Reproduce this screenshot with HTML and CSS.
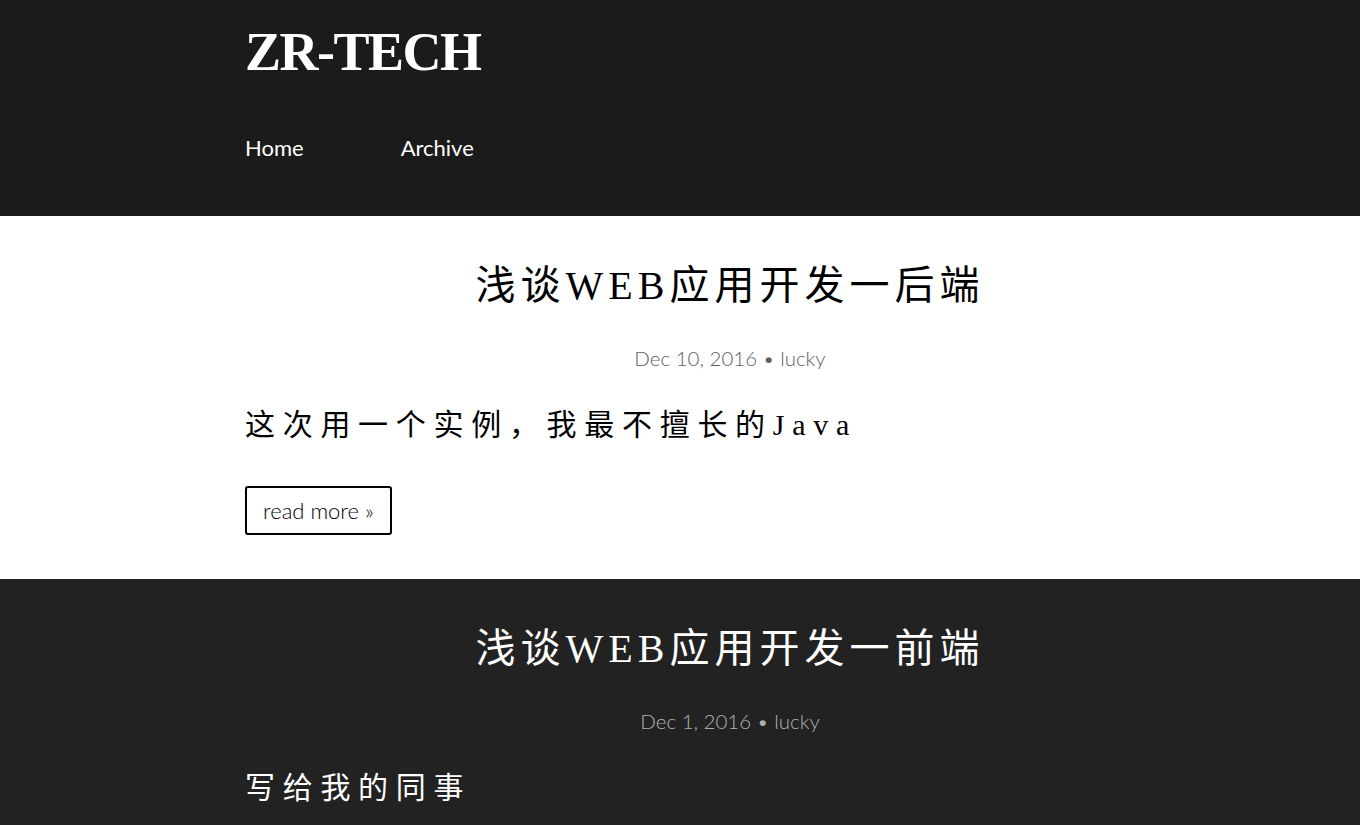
FILE: index.html
```html
<!DOCTYPE html>
<html lang="zh">
<head>
<meta charset="utf-8">
<title>ZR-TECH</title>
<link rel="stylesheet" href="styles.css">
</head>
<body>
<header class="site-header">
  <div class="wrap">
    <h1 class="site-title">ZR-TECH</h1>
    <nav class="site-nav">
      <a class="nav-link" href="#">Home</a>
      <a class="nav-link" href="#">Archive</a>
    </nav>
  </div>
</header>
<main>
  <section class="post post-light">
    <div class="wrap">
      <h2 class="post-title">浅谈WEB应用开发一后端</h2>
      <p class="post-meta">Dec 10, 2016 • lucky</p>
      <p class="post-excerpt">这次用一个实例，我最不擅长的Java</p>
      <a class="read-more" href="#">read more »</a>
    </div>
  </section>
  <section class="post post-dark">
    <div class="wrap">
      <h2 class="post-title">浅谈WEB应用开发一前端</h2>
      <p class="post-meta">Dec 1, 2016 • lucky</p>
      <p class="post-excerpt">写给我的同事</p>
    </div>
  </section>
</main>
</body>
</html>
```

FILE: styles.css
```css
* { box-sizing: border-box; }
html, body { margin: 0; padding: 0; }
body {
  font-family: "Lato", "Noto Sans", sans-serif;
  background: #222222;
  color: #000;
}
.wrap {
  margin-left: 245px;
  width: 970px;
}
.site-header {
  background: #1b1b1b;
  height: 216px;
  padding-top: 19px;
}
.site-title {
  margin: 0;
  font-family: "Liberation Serif", serif;
  font-weight: bold;
  font-size: 54px;
  letter-spacing: -1.5px;
  line-height: 66px;
  color: #fff;
}
.site-nav {
  display: flex;
  margin-top: 48px;
}
.nav-link {
  font-family: "Lato", sans-serif;
  font-weight: 400;
  font-size: 22px;
  line-height: 30px;
  color: #fff;
  text-decoration: none;
  margin-right: 97px;
}
.post {
  padding: 42px 0 44px;
}
.post-light { background: #fff; color: #000; }
.post-dark { background: #222222; color: #fff; }
.post-title {
  margin: 0;
  text-align: center;
  font-family: "Liberation Serif", "Noto Sans CJK SC", serif;
  font-weight: normal;
  font-size: 40px;
  letter-spacing: 5px;
  line-height: 56px;
}
.post-meta {
  margin: 30px 0 0;
  text-align: center;
  font-family: "Lato", sans-serif;
  font-weight: 300;
  font-size: 20.5px;
  line-height: 28px;
  color: #5f5f5f;
}
.post-dark .post-meta { color: #b0b0b0; }
.post-excerpt {
  margin: 32px 0 0;
  font-family: "Liberation Serif", "Noto Sans CJK SC", serif;
  font-size: 30px;
  letter-spacing: 7.7px;
  line-height: 42px;
}
.read-more {
  display: inline-block;
  margin-top: 40px;
  height: 49px;
  padding: 0 16px;
  border: 2px solid #000;
  border-radius: 3px;
  font-family: "Lato", sans-serif;
  font-weight: 300;
  font-size: 22px;
  line-height: 45px;
  color: #000;
  text-decoration: none;
}
```
